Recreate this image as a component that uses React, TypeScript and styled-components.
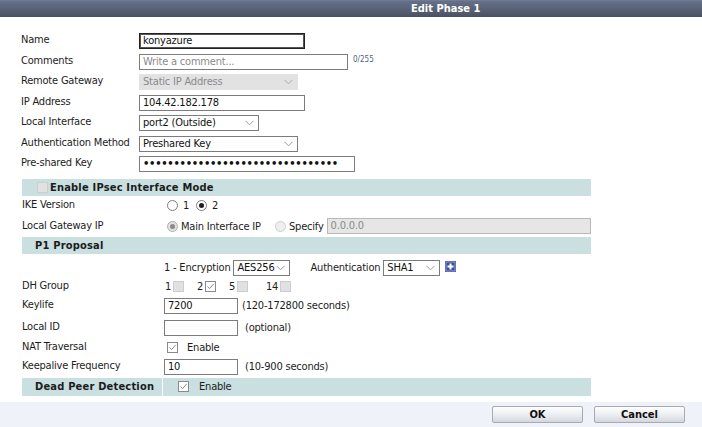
import React from "react";
import styled, { createGlobalStyle } from "styled-components";

const GlobalStyle = createGlobalStyle`
  html, body { margin: 0; padding: 0; background: #fff; }
  body {
    font-family: "DejaVu Sans Condensed", "DejaVu Sans", sans-serif;
    font-size: 11px;
    letter-spacing: -0.2px;
    color: #1c1c1c;
  }
`;

const Page = styled.div`
  width: 702px;
  height: 427px;
  display: flex;
  flex-direction: column;
  overflow: hidden;
`;

const TitleBar = styled.div`
  height: 17px;
  flex: none;
  background: linear-gradient(#65708a 0%, #5a6479 45%, #4a5161 100%);
  border-top: 1px solid #707b90;
  box-sizing: border-box;
  color: #fff;
  font-weight: bold;
  font-size: 11px;
  letter-spacing: 0;
  line-height: 16px;
  padding-left: 411px;
`;

const Body = styled.div`
  flex: 1;
  padding: 14px 0 0 21px;
`;

const TopGrid = styled.div`
  display: grid;
  grid-template-columns: 118px auto;
  grid-auto-rows: 20.5px;
  align-items: center;
`;

const Label = styled.div`
  line-height: 14px;
  margin-top: -2px;
  white-space: nowrap;
`;

const Cell = styled.div<{ $gap?: number }>`
  display: flex;
  align-items: center;
  gap: ${(p) => p.$gap ?? 0}px;
`;

const TextInput = styled.div<{ $w: number; $focus?: boolean; $disabled?: boolean; $placeholder?: boolean }>`
  width: ${(p) => p.$w}px;
  height: 16px;
  box-sizing: border-box;
  border: 1px solid ${(p) => (p.$focus ? "#222" : p.$disabled ? "#b8b8b8" : "#7c7c7c")};
  box-shadow: ${(p) => (p.$focus ? "inset 0 0 0 1px #555" : "none")};
  background: ${(p) => (p.$disabled ? "#e6e6e6" : "#fff")};
  color: ${(p) => (p.$disabled || p.$placeholder ? "#8a8a8a" : "#111")};
  padding: 0 3px;
  line-height: 14px;
  white-space: nowrap;
  overflow: hidden;
`;

const Dots = styled.span`
  font-family: "DejaVu Sans", sans-serif;
  font-weight: bold;
  font-size: 10px;
  letter-spacing: -0.3px;
  line-height: 14px;
  color: #111;
`;

const Counter = styled.span`
  font-size: 8px;
  letter-spacing: 0;
  color: #4f5f7c;
  align-self: flex-start;
  margin-top: 1px;
`;

const SelectBox = styled.div<{ $w: number; $disabled?: boolean }>`
  width: ${(p) => p.$w}px;
  height: 16px;
  box-sizing: border-box;
  border: 1px solid ${(p) => (p.$disabled ? "#e2e2e2" : "#7c7c7c")};
  background: ${(p) => (p.$disabled ? "#e2e2e2" : "#fff")};
  color: ${(p) => (p.$disabled ? "#8a8a8a" : "#111")};
  display: flex;
  align-items: center;
  justify-content: space-between;
  gap: 2px;
  padding: 0 4px 0 3px;
  line-height: 14px;
  white-space: nowrap;
`;

const Chevron = ({ color = "#999" }: { color?: string }) => (
  <svg width="9" height="6" viewBox="0 0 9 6" style={{ flex: "none" }}>
    <path d="M0.5 0.8 L4.5 4.8 L8.5 0.8" fill="none" stroke={color} strokeWidth="1" />
  </svg>
);

const Section = styled.div`
  width: 569px;
  margin: 4px 0 0 1px;
`;

const SectionHeader = styled.div<{ $pad: number }>`
  height: 17px;
  background: #c9dfe0;
  font-weight: bold;
  display: flex;
  align-items: center;
  gap: 2px;
  padding-left: ${(p) => p.$pad}px;
  letter-spacing: 0.2px;
`;

const Row = styled.div<{ $h: number; $align?: string; $pb?: number }>`
  display: grid;
  grid-template-columns: 142px auto;
  height: ${(p) => p.$h}px;
  align-items: ${(p) => p.$align ?? "center"};
  padding-bottom: ${(p) => p.$pb ?? 0}px;
  box-sizing: border-box;
`;

const RowLabel = styled.div`
  white-space: nowrap;
  margin-top: -2px;
`;

const Radio = styled.span<{ $checked?: boolean; $muted?: boolean; $faint?: boolean }>`
  width: 11px;
  height: 11px;
  box-sizing: border-box;
  border-radius: 50%;
  border: 1px solid ${(p) => (p.$faint ? "#cfcfcf" : p.$muted ? "#b0b0b0" : "#7e7e7e")};
  background: ${(p) => (p.$faint ? "#efefef" : p.$muted ? "#e2e2e2" : "#fff")};
  display: inline-flex;
  align-items: center;
  justify-content: center;
  flex: none;
  &::after {
    content: "";
    display: ${(p) => (p.$checked ? "block" : "none")};
    width: 5px;
    height: 5px;
    border-radius: 50%;
    background: ${(p) => (p.$muted ? "#8a8a8a" : "#1e1e1e")};
  }
`;

const Box = styled.span<{ $disabled?: boolean }>`
  width: 11px;
  height: 11px;
  box-sizing: border-box;
  border: 1px solid ${(p) => (p.$disabled ? "#cdcdcd" : "#8a8a8a")};
  background: ${(p) => (p.$disabled ? "#e1e1e1" : "#fff")};
  display: inline-flex;
  align-items: center;
  justify-content: center;
  flex: none;
`;

const Check = () => (
  <svg width="9" height="9" viewBox="0 0 9 9">
    <path d="M1.5 4.5 L3.6 6.6 L7.8 1.8" fill="none" stroke="#8d8d8d" strokeWidth="1" />
  </svg>
);

const CheckBox = ({ checked, disabled }: { checked?: boolean; disabled?: boolean }) => (
  <Box $disabled={disabled}>{checked && <Check />}</Box>
);

const RadioText = styled.span<{ $ml?: number }>`
  margin-left: ${(p) => p.$ml ?? 0}px;
  white-space: nowrap;
`;

const Options = styled.div<{ $pl?: number }>`
  display: flex;
  align-items: center;
  padding-left: ${(p) => p.$pl ?? 0}px;
`;

const RadioItem = styled.div<{ $w?: number }>`
  display: flex;
  align-items: center;
  gap: 5px;
  width: ${(p) => (p.$w ? `${p.$w}px` : "auto")};
`;

const DhGrid = styled.div`
  display: grid;
  grid-template-columns: 32px 32px 37px auto;
  align-items: center;
  margin-left: 1px;
`;

const DhItem = styled.div`
  display: flex;
  align-items: center;
  gap: 2px;
`;

const Hint = styled.span<{ $ml: number }>`
  margin-left: ${(p) => p.$ml}px;
  white-space: nowrap;
`;

const Spaced = styled.span<{ $ml: number }>`
  margin-left: ${(p) => p.$ml}px;
  display: flex;
  align-items: center;
  white-space: nowrap;
`;

const PlusIcon = () => (
  <svg width="11" height="11" viewBox="0 0 11 11" style={{ marginTop: -3 }}>
    <rect x="0" y="0" width="11" height="11" fill="#3d4f9c" />
    <rect x="1" y="1" width="9" height="9" fill="none" stroke="#8ea0d8" strokeWidth="1" />
    <rect x="4.5" y="2.5" width="2" height="6" fill="#fff" />
    <rect x="2.5" y="4.5" width="6" height="2" fill="#fff" />
  </svg>
);

const DpdRow = styled.div`
  display: grid;
  grid-template-columns: 140px 1px auto;
  height: 18px;
  background: #c9dfe0;
  align-items: center;
`;

const DpdLabel = styled.div`
  font-weight: bold;
  padding-left: 13px;
  letter-spacing: 0.2px;
`;

const Divider = styled.div`
  height: 100%;
  background: #fff;
`;

const DpdValue = styled.div`
  display: flex;
  align-items: center;
  padding-left: 15px;
  gap: 10px;
`;

const Footer = styled.div`
  height: 25px;
  flex: none;
  background: #eff2f8;
  display: flex;
  justify-content: flex-end;
  align-items: flex-start;
  padding: 4px 17px 0 0;
  box-sizing: border-box;
  gap: 11px;
`;

const Button = styled.div`
  width: 91px;
  height: 17px;
  box-sizing: border-box;
  border: 1px solid #a7aab0;
  border-radius: 2px;
  background: linear-gradient(#fdfdfd 0%, #eceff2 50%, #d3d8dd 100%);
  font-weight: bold;
  letter-spacing: 0;
  display: flex;
  align-items: center;
  justify-content: center;
  color: #111;
`;

export default function App() {
  return (
    <>
      <GlobalStyle />
      <Page>
        <TitleBar>Edit Phase 1</TitleBar>
        <Body>
          <TopGrid>
            <Label>Name</Label>
            <Cell>
              <TextInput $w={166} $focus>konyazure</TextInput>
            </Cell>
            <Label>Comments</Label>
            <Cell $gap={5}>
              <TextInput $w={209} $placeholder>Write a comment...</TextInput>
              <Counter>0/255</Counter>
            </Cell>
            <Label>Remote Gateway</Label>
            <Cell>
              <SelectBox $w={159} $disabled>
                <span>Static IP Address</span>
                <Chevron color="#aaa" />
              </SelectBox>
            </Cell>
            <Label>IP Address</Label>
            <Cell>
              <TextInput $w={166}>104.42.182.178</TextInput>
            </Cell>
            <Label>Local Interface</Label>
            <Cell>
              <SelectBox $w={120}>
                <span>port2 (Outside)</span>
                <Chevron />
              </SelectBox>
            </Cell>
            <Label>Authentication Method</Label>
            <Cell>
              <SelectBox $w={159}>
                <span>Preshared Key</span>
                <Chevron />
              </SelectBox>
            </Cell>
            <Label>Pre-shared Key</Label>
            <Cell>
              <TextInput $w={216}>
                <Dots>{"•".repeat(32)}</Dots>
              </TextInput>
            </Cell>
          </TopGrid>

          <Section>
            <SectionHeader $pad={15}>
              <CheckBox disabled />
              <span>Enable IPsec Interface Mode</span>
            </SectionHeader>
            <Row $h={20}>
              <RowLabel>IKE Version</RowLabel>
              <Options $pl={3}>
                <RadioItem $w={29}>
                  <Radio />
                  <RadioText>1</RadioText>
                </RadioItem>
                <RadioItem>
                  <Radio $checked />
                  <RadioText>2</RadioText>
                </RadioItem>
              </Options>
            </Row>
            <Row $h={21}>
              <RowLabel>Local Gateway IP</RowLabel>
              <Options $pl={3}>
                <RadioItem $w={108}>
                  <Radio $checked $muted />
                  <RadioText $ml={-2}>Main Interface IP</RadioText>
                </RadioItem>
                <RadioItem>
                  <Radio $faint />
                  <RadioText $ml={-2}>Specify</RadioText>
                  <TextInput $w={264} $disabled style={{ marginLeft: -2 }}>
                    0.0.0.0
                  </TextInput>
                </RadioItem>
              </Options>
            </Row>
            <SectionHeader $pad={13}>
              <span>P1 Proposal</span>
            </SectionHeader>
            <Row $h={24} $align="end" $pb={2}>
              <span />
              <Options>
                <span>1 - Encryption</span>
                <Spaced $ml={3}>
                  <SelectBox $w={57}>
                    <span>AES256</span>
                    <Chevron />
                  </SelectBox>
                </Spaced>
                <Spaced $ml={20}>Authentication</Spaced>
                <Spaced $ml={3}>
                  <SelectBox $w={57}>
                    <span>SHA1</span>
                    <Chevron />
                  </SelectBox>
                </Spaced>
                <Spaced $ml={5}>
                  <PlusIcon />
                </Spaced>
              </Options>
            </Row>
            <Row $h={17}>
              <RowLabel>DH Group</RowLabel>
              <DhGrid>
                <DhItem>
                  <span>1</span>
                  <CheckBox disabled />
                </DhItem>
                <DhItem>
                  <span>2</span>
                  <CheckBox checked />
                </DhItem>
                <DhItem>
                  <span>5</span>
                  <CheckBox disabled />
                </DhItem>
                <DhItem>
                  <span>14</span>
                  <CheckBox disabled />
                </DhItem>
              </DhGrid>
            </Row>
            <Row $h={22}>
              <RowLabel>Keylife</RowLabel>
              <Options>
                <TextInput $w={74}>7200</TextInput>
                <Hint $ml={4}>(120-172800 seconds)</Hint>
              </Options>
            </Row>
            <Row $h={22}>
              <RowLabel>Local ID</RowLabel>
              <Options>
                <TextInput $w={74} />
                <Hint $ml={7}>(optional)</Hint>
              </Options>
            </Row>
            <Row $h={17}>
              <RowLabel>NAT Traversal</RowLabel>
              <Options $pl={3}>
                <CheckBox checked />
                <Hint $ml={9}>Enable</Hint>
              </Options>
            </Row>
            <Row $h={22}>
              <RowLabel>Keepalive Frequency</RowLabel>
              <Options>
                <TextInput $w={74}>10</TextInput>
                <Hint $ml={7}>(10-900 seconds)</Hint>
              </Options>
            </Row>
            <DpdRow>
              <DpdLabel>Dead Peer Detection</DpdLabel>
              <Divider />
              <DpdValue>
                <CheckBox checked />
                <span>Enable</span>
              </DpdValue>
            </DpdRow>
          </Section>
        </Body>
        <Footer>
          <Button>OK</Button>
          <Button>Cancel</Button>
        </Footer>
      </Page>
    </>
  );
}
